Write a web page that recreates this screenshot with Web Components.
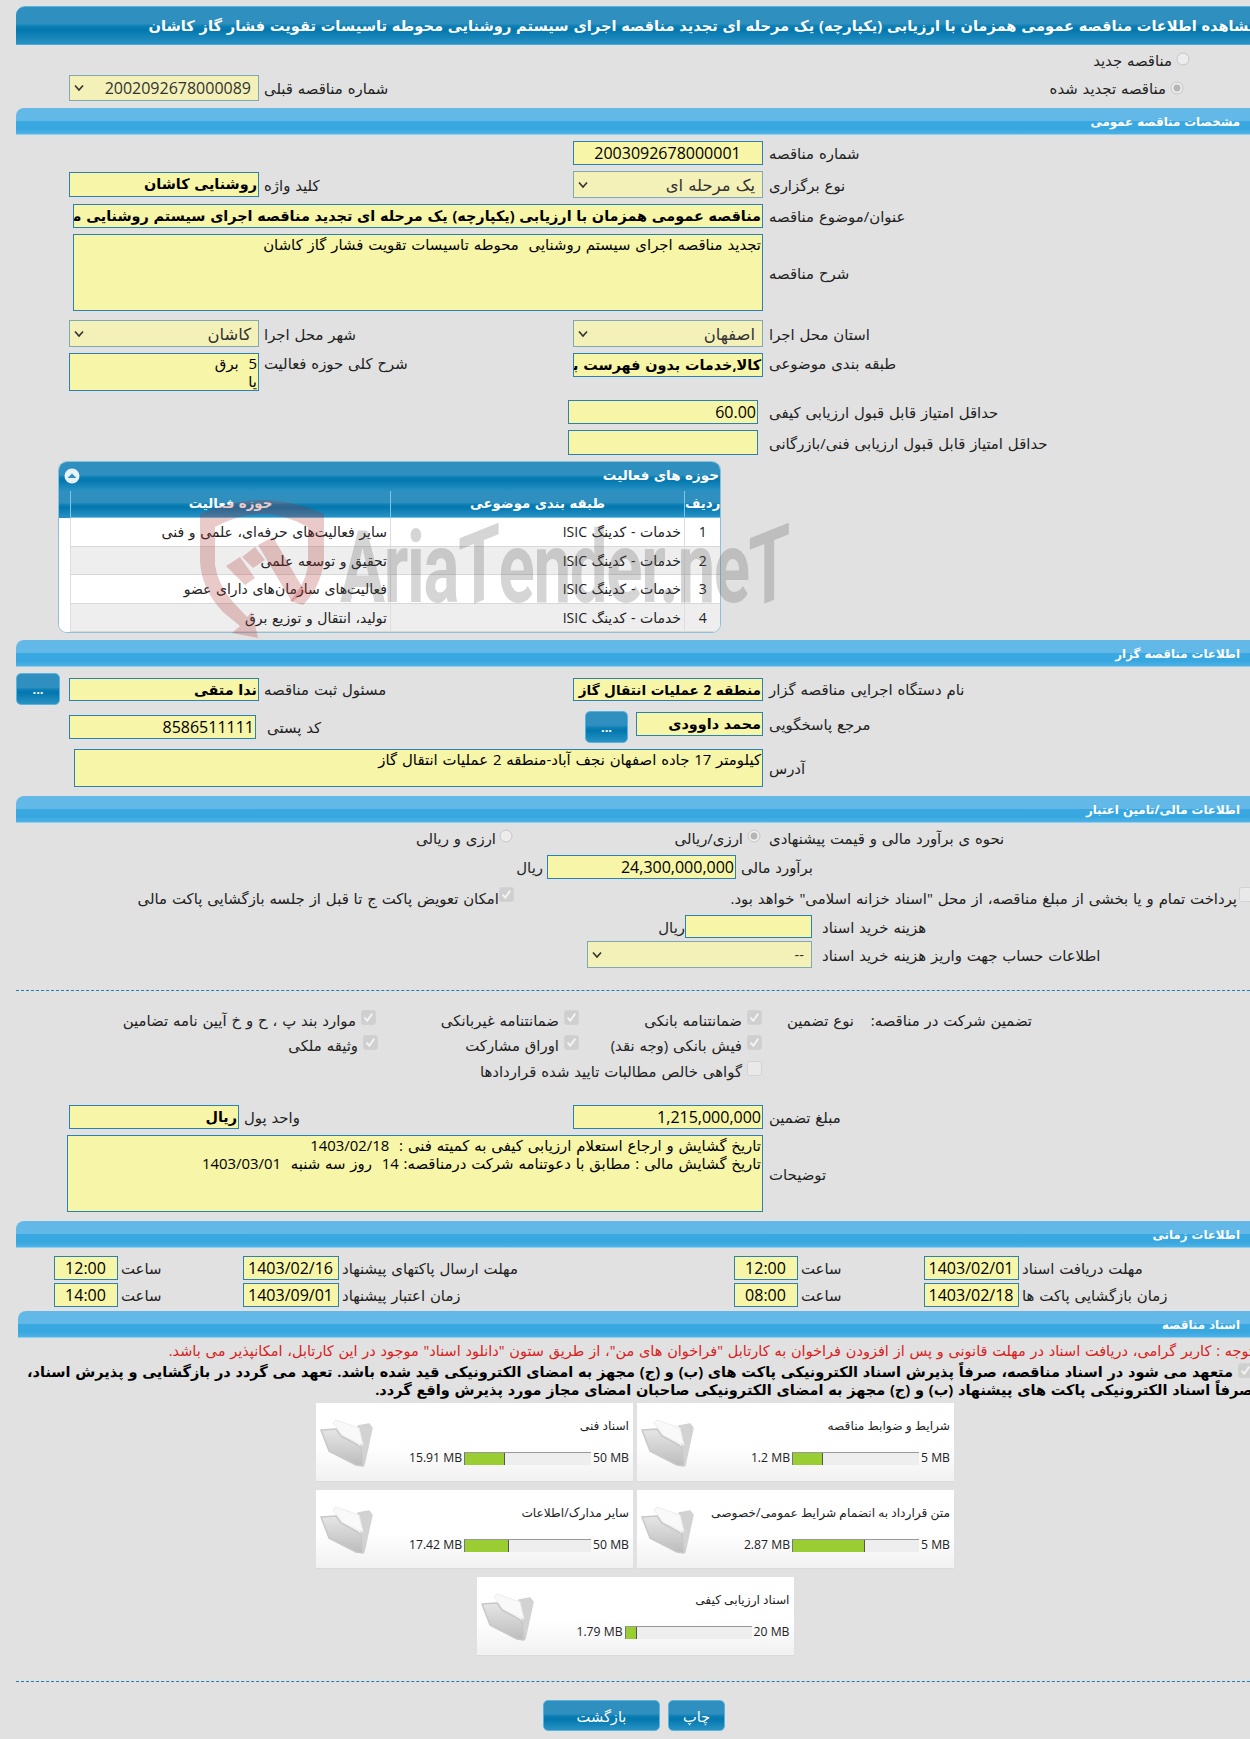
<!DOCTYPE html>
<html lang="fa">
<head>
<meta charset="utf-8">
<title>مشاهده اطلاعات مناقصه</title>
<style>
    html { overflow-x: hidden; background: #e1e1e1; }
    body {
        margin: 0;
        width: 1275px;
        height: 1739px;
        background: #e1e1e1;
        font: 14.9px "Open Sans", "DejaVu Sans", sans-serif;
        word-spacing: 1px;
        color: #222;
    }
</style>
</head>
<body>
<script>
const DARK_BAR = 'linear-gradient(#2f90bf 0, #2f90bf 44%, #0e7fb5 52%, #0277ae 62%, #2a92c4 100%)';

class TenPage extends HTMLElement {
    constructor() {
        super();
        this.attachShadow({ mode: 'open' });
    }
    connectedCallback() {
        this.shadowRoot.innerHTML = `
            <style>
                :host { display: block; position: relative; padding-top: 6px; }
                .shield { position: absolute; left: 200px; top: 500px; pointer-events: none; }
                .mark {
                    position: absolute; left: 340px; top: 508px; pointer-events: none;
                    font: bold 100px Roboto, sans-serif; line-height: 120px; white-space: nowrap; word-spacing: 0;
                    color: rgba(80, 80, 80, .24); transform-origin: 0 50%; transform: scaleX(.672);
                    direction: ltr; letter-spacing: -2px;
                }
                .mark span { display: inline-block; transform: skewY(-15deg); }
            </style>
            <slot></slot>
            <svg class="shield" width="126" height="140" viewBox="0 0 126 140">
                <g fill="rgba(170,40,40,.25)">
                    <path d="M0 14 Q62 -14 124 14 L124 62 Q120 88 103 105 L90 101 Q108 80 108 62 L108 27 Q62 1 15 27 L15 65 Q18 85 33 102 L47 117 L52 112 L58 138 L32 133 L40 126 L23 112 Q2 90 0 62 Z"/>
                    <path d="M26 66 L40 57 L55 78 L45 85 Z"/>
                    <path d="M42 57 L55 47 L65 60 L53 68 Z"/>
                    <path d="M58 45 L73 37 L105 92 L92 102 Z"/>
                </g>
            </svg>
            <div class="mark">Aria<span>T</span>ender.ne<span>T</span></div>
        `;
    }
}

class TenTitle extends HTMLElement {
    constructor() {
        super();
        this.attachShadow({ mode: 'open' });
    }
    connectedCallback() {
        this.shadowRoot.innerHTML = `
            <style>
                :host {
                    display: block; height: 39px; line-height: 37px; box-sizing: border-box;
                    background: ${DARK_BAR};
                    border-top: 1px solid #5db5de; border-bottom: 1px solid #4aa8d6;
                    border-top-left-radius: 9px; margin-left: 16px;
                    color: #fff; font-weight: bold; font-size: 14.6px;
                    direction: rtl; white-space: nowrap; padding-right: 17px; overflow: hidden;
                }
            </style>
            <slot></slot>
        `;
    }
}

class TenBand extends HTMLElement {
    constructor() {
        super();
        this.attachShadow({ mode: 'open' });
    }
    connectedCallback() {
        this.shadowRoot.innerHTML = `
            <style>
                :host {
                    display: block; height: 27px; line-height: 26px; box-sizing: border-box;
                    margin-top: var(--top, 7px); margin-left: var(--ml, 16px);
                    background: linear-gradient(#62b9e8 0, #62b9e8 48%, #3aa8e1 52%, #38a7e0 80%, #4eb2e6 100%);
                    border-bottom: 1px solid #8fd0f0;
                    border-top-left-radius: 8px;
                    color: #fff; font-weight: bold; font-size: 11.8px;
                    direction: rtl; padding-right: 35px;
                }
            </style>
            <slot></slot>
        `;
    }
}

// one line of the form, items follow each other from the left edge
class TenRow extends HTMLElement {
    constructor() {
        super();
        this.attachShadow({ mode: 'open' });
    }
    connectedCallback() {
        this.shadowRoot.innerHTML = `
            <style>
                :host {
                    display: flex; direction: ltr; align-items: center;
                    margin-top: var(--top, 6px); height: var(--h, 24px);
                    padding-left: 16px;
                }
            </style>
            <slot></slot>
        `;
    }
}

// box (input, select or textarea look) and its label on the right
class TenField extends HTMLElement {
    constructor() {
        super();
        this.attachShadow({ mode: 'open' });
    }
    connectedCallback() {
        const kind = this.getAttribute('kind') || 'input';
        const label = this.getAttribute('label') || '';
        this.shadowRoot.innerHTML = `
            <style>
                :host {
                    display: flex; flex: none; direction: ltr; align-items: var(--align, center);
                    margin-left: var(--ml, 0);
                }
                .box {
                    flex: none; width: var(--w, 190px); height: var(--bh, 24px); box-sizing: border-box;
                    position: relative; overflow: hidden; direction: rtl;
                    background: #f7f5a7; border: 1px solid #2a82b0;
                    font-size: var(--fs, 16px); line-height: var(--lh, 22px); color: #000;
                    white-space: pre; padding-right: var(--pr, 1px); text-align: var(--ta, right);
                }
                .select {
                    background: #f3f0b8; border: 1px solid #7fa9b5; color: #333;
                    padding-right: 7px; line-height: var(--lh, 25px);
                }
                .select svg { position: absolute; left: 4px; top: 50%; margin-top: -4px; }
                .area { font-size: var(--fs, 14.9px); line-height: var(--lh, 18px); white-space: pre-wrap; }
                .strong { font-weight: bold; font-size: var(--fs, 14.4px); }
                .lab {
                    flex: none; width: var(--lw, auto); margin-left: var(--gap, 5px);
                    margin-top: var(--ltop, 0); direction: rtl; text-align: left; white-space: nowrap;
                    color: #222;
                }
            </style>
            <div class="box ${kind} ${this.hasAttribute('strong') ? 'strong' : ''}"><slot></slot>${kind === 'select' ? `
                <svg width="10" height="8" viewBox="0 0 10 8"><path d="M1 1.5 L5 6 L9 1.5" fill="none" stroke="#333" stroke-width="1.6"/></svg>` : ''}</div>
            <span class="lab" dir="rtl"></span>
        `;
        this.shadowRoot.querySelector('.lab').textContent = label;
    }
}

class TenText extends HTMLElement {
    constructor() {
        super();
        this.attachShadow({ mode: 'open' });
    }
    connectedCallback() {
        this.shadowRoot.innerHTML = `
            <style>
                :host {
                    display: block; flex: none; direction: rtl; white-space: nowrap;
                    margin-left: var(--ml, 0); width: var(--w, auto);
                    text-align: var(--ta, right); color: #222;
                }
            </style>
            <slot></slot>
        `;
    }
}

// disabled radio or checkbox with the text on its left
class TenChoice extends HTMLElement {
    constructor() {
        super();
        this.attachShadow({ mode: 'open' });
    }
    connectedCallback() {
        const type = this.getAttribute('type') || 'check';
        const on = this.hasAttribute('on');
        const glyph = type === 'radio'
            ? `<svg width="14" height="14" viewBox="0 0 14 14"><circle cx="7" cy="7" r="6" fill="#ececec" stroke="#c6c6c6"/>${on ? '<circle cx="7" cy="7" r="3.4" fill="#b5b5b5"/>' : ''}</svg>`
            : `<svg width="15" height="15" viewBox="0 0 15 15"><rect x=".5" y=".5" width="14" height="14" rx="2" fill="${on ? '#cfcfcf' : '#e9e9e9'}" stroke="#d2d2d2"/>${on ? '<path d="M3.6 7.6 L6.3 10.8 L11.2 3.6" fill="none" stroke="#f4f4f4" stroke-width="1.9"/>' : ''}</svg>`;
        this.shadowRoot.innerHTML = `
            <style>
                :host {
                    display: flex; flex: none; direction: ltr; align-items: center;
                    margin-left: var(--ml, 0);
                }
                .txt { width: var(--w, auto); direction: rtl; text-align: right; white-space: nowrap; color: #222; }
                svg { display: block; flex: none; margin-left: var(--g, 5px); margin-top: var(--mt, -5px); }
            </style>
            <div class="txt"><slot></slot></div>
            ${glyph}
        `;
    }
}

class TenButton extends HTMLElement {
    constructor() {
        super();
        this.attachShadow({ mode: 'open' });
    }
    connectedCallback() {
        this.shadowRoot.innerHTML = `
            <style>
                :host {
                    display: flex; flex: none; align-items: center; justify-content: center;
                    width: var(--w, 44px); height: var(--bh, 32px); box-sizing: border-box;
                    margin-left: var(--ml, 0);
                    background: ${DARK_BAR}; border: 1px solid #58b4de; border-radius: 5px;
                    color: #fff; font-size: var(--fs, 13px); font-weight: var(--fw, bold); direction: rtl;
                }
            </style>
            <slot></slot>
        `;
    }
}

class TenRule extends HTMLElement {
    constructor() {
        super();
        this.attachShadow({ mode: 'open' });
    }
    connectedCallback() {
        this.shadowRoot.innerHTML = `
            <style>
                :host {
                    display: block; height: 0; margin-left: 16px; margin-top: var(--top, 22px);
                    border-top: 1px dashed #2180b0;
                }
            </style>
        `;
    }
}

class TenPanel extends HTMLElement {
    constructor() {
        super();
        this.attachShadow({ mode: 'open' });
    }
    connectedCallback() {
        this.shadowRoot.innerHTML = `
            <style>
                :host {
                    display: block; width: 663px; height: 172px; box-sizing: border-box;
                    margin: 6px 0 0 58px; overflow: hidden; background: #fff;
                    border: 1px solid #8cc1dc; border-radius: 9px;
                }
                .head {
                    height: 29px; line-height: 27px; background: ${DARK_BAR}; position: relative;
                    color: #fff; font-weight: bold; font-size: 13.5px; direction: rtl; padding-right: 1px;
                }
                .head svg { position: absolute; left: 5px; top: 6px; }
                .grid { display: grid; grid-template-columns: 11px 320px 294px 1fr; direction: ltr; }
            </style>
            <div class="head">حوزه های فعالیت
                <svg width="16" height="16" viewBox="0 0 16 16"><circle cx="8" cy="8" r="7.5" fill="#e8f2f8"/><path d="M3.6 10 L8 5.6 L12.4 10 Z" fill="#2f8fbe"/></svg>
            </div>
            <div class="grid"><slot></slot></div>
        `;
    }
}

class TenCell extends HTMLElement {
    constructor() {
        super();
        this.attachShadow({ mode: 'open' });
    }
    connectedCallback() {
        const head = this.hasAttribute('head');
        const tone = this.hasAttribute('tone');
        this.shadowRoot.innerHTML = `
            <style>
                :host {
                    display: block; box-sizing: border-box; direction: rtl; white-space: nowrap;
                    height: ${head ? 27 : 28.5}px; line-height: ${head ? 24 : 28}px; font-size: ${head ? 13.3 : 14}px;
                    background: ${head ? DARK_BAR : tone ? '#eeeeee' : '#ffffff'};
                    color: ${head ? '#fff' : '#222'}; font-weight: ${head ? 'bold' : 'normal'};
                    text-align: ${head || this.hasAttribute('mid') ? 'center' : 'right'};
                    padding: 0 ${head ? 0 : 3}px;
                    border-left: 1px solid ${head ? '#7cc6ea' : '#dedede'};
                    border-bottom: ${head ? '1px solid #6fbfe6' : '1px solid #d8d8d8'};
                }
                :host([blank]) { background: ${head ? DARK_BAR : '#fff'}; border: 0; padding: 0; }
            </style>
            <slot></slot>
        `;
    }
}

class TenNotice extends HTMLElement {
    constructor() {
        super();
        this.attachShadow({ mode: 'open' });
    }
    connectedCallback() {
        this.shadowRoot.innerHTML = `
            <style>
                :host {
                    display: block; margin-top: 3px; direction: rtl; white-space: nowrap;
                    padding-right: 22px; font-size: 14.5px; line-height: 20px; color: #d8201c;
                }
                .strong {
                    margin-top: 2px; color: #000; font-weight: bold; font-size: 14.5px; line-height: 17.5px;
                }
                svg { float: right; margin: 0 0 0 5px; }
            </style>
            <slot></slot>
            <div class="strong">
                <svg width="15" height="15" viewBox="0 0 15 15"><rect x=".5" y=".5" width="14" height="14" rx="2" fill="#cfcfcf" stroke="#d2d2d2"/><path d="M3.6 7.6 L6.3 10.8 L11.2 3.6" fill="none" stroke="#f4f4f4" stroke-width="1.9"/></svg>
                <slot name="pledge"></slot>
            </div>
        `;
    }
}

class TenDocs extends HTMLElement {
    constructor() {
        super();
        this.attachShadow({ mode: 'open' });
    }
    connectedCallback() {
        this.shadowRoot.innerHTML = `
            <style>
                :host {
                    display: flex; flex-wrap: wrap; justify-content: center; gap: 8px 4px;
                    width: 638px; margin: 5px 0 0 316px; direction: rtl;
                }
            </style>
            <slot></slot>
        `;
    }
}

class TenDoc extends HTMLElement {
    constructor() {
        super();
        this.attachShadow({ mode: 'open' });
    }
    connectedCallback() {
        const pct = parseFloat(this.getAttribute('used')) / parseFloat(this.getAttribute('max')) * 100;
        this.shadowRoot.innerHTML = `
            <style>
                :host {
                    display: flex; flex: none; direction: ltr; width: 317px; height: 79px; box-sizing: border-box;
                    background: linear-gradient(#fff 0, #fff 55%, #f1f1f1 100%);
                    border-bottom: 1px solid #dadada; font-size: 12.2px; color: #222; word-spacing: 0;
                }
                svg.folder { flex: none; margin: 16px 0 0 4px; }
                .body { flex: 1; display: flex; flex-direction: column; padding-right: 4px; }
                .name { height: 37px; padding-top: 13px; box-sizing: border-box; direction: rtl; white-space: nowrap; line-height: 20px; }
                .meter { display: flex; justify-content: flex-end; align-items: center; height: 16px; margin-top: 10px; line-height: 16px; white-space: nowrap; }
                .bar {
                    width: 127px; height: 13px; margin: 0 2px; box-sizing: border-box; background: #eeeeee;
                    border-top: 1px solid #999; border-left: 1px solid #777; flex: none;
                }
                .fill { height: 100%; width: ${pct}%; background: #9acd32; border-right: 1px solid #555; box-sizing: border-box; }
            </style>
            <svg class="folder" width="53" height="48" viewBox="0 0 53 48">
                <defs>
                    <linearGradient id="f" x1="0" y1="0" x2="0" y2="1"><stop offset="0" stop-color="#e6e6e6"/><stop offset="1" stop-color="#bcbcbc"/></linearGradient>
                    <filter id="soft"><feGaussianBlur stdDeviation=".45"/></filter>
                </defs>
                <g filter="url(#soft)" stroke-linejoin="round">
                    <path d="M38 7 L49 5 L52 9 L44 46 Z" fill="#d2d2d2" stroke="#d2d2d2" stroke-width="1.5"/>
                    <path d="M13 4 L16 1 L39 9 L43 26 L23 17 Z" fill="#f9f9f9" stroke="#ececec"/>
                    <path d="M1 11 L16 10 L21 17 L38 26 L41 29 L43 47 L36 46 L9 32 Z" fill="url(#f)" stroke="#c8c8c8" stroke-width="1.5"/>
                </g>
            </svg>
            <div class="body">
                <div class="name"></div>
                <div class="meter"><span class="u"></span><div class="bar"><div class="fill"></div></div><span class="m"></span></div>
            </div>
        `;
        this.shadowRoot.querySelector('.name').textContent = this.getAttribute('name');
        this.shadowRoot.querySelector('.u').textContent = this.getAttribute('used') + ' MB';
        this.shadowRoot.querySelector('.m').textContent = this.getAttribute('max') + ' MB';
    }
}

customElements.define('ten-page', TenPage);
customElements.define('ten-title', TenTitle);
customElements.define('ten-band', TenBand);
customElements.define('ten-row', TenRow);
customElements.define('ten-field', TenField);
customElements.define('ten-text', TenText);
customElements.define('ten-choice', TenChoice);
customElements.define('ten-button', TenButton);
customElements.define('ten-rule', TenRule);
customElements.define('ten-panel', TenPanel);
customElements.define('ten-cell', TenCell);
customElements.define('ten-notice', TenNotice);
customElements.define('ten-docs', TenDocs);
customElements.define('ten-doc', TenDoc);
</script>

<ten-page>
    <ten-title>مشاهده اطلاعات مناقصه عمومی همزمان با ارزیابی (یکپارچه) یک مرحله ای تجدید مناقصه اجرای سیستم روشنایی محوطه تاسیسات تقویت فشار گاز کاشان</ten-title>

    <ten-row style="--top:5px;--h:20px">
        <ten-choice type="radio" style="--ml:956px;--w:200px;--g:4px;--mt:-3px">مناقصه جدید</ten-choice>
    </ten-row>
    <ten-row style="--top:5px;--h:26px">
        <ten-field kind="select" label="شماره مناقصه قبلی" style="--ml:53px;--bh:26px;--lw:662px">2002092678000089</ten-field>
        <ten-choice type="radio" on style="--ml:0;--w:240px;--g:4px;--mt:-1px">مناقصه تجدید شده</ten-choice>
    </ten-row>

    <ten-band>مشخصات مناقصه عمومی</ten-band>

    <ten-row>
        <ten-field label="شماره مناقصه" style="--ml:557px;--gap:6px;--ta:center">2003092678000001</ten-field>
    </ten-row>
    <ten-row style="--h:27px">
        <ten-field strong label="کلید واژه" style="--ml:53px;--bh:25px;--lw:309px">روشنایی کاشان</ten-field>
        <ten-field kind="select" label="نوع برگزاری" style="--bh:27px;--gap:6px;--fs:16.4px">یک مرحله ای</ten-field>
    </ten-row>
    <ten-row>
        <ten-field strong label="عنوان/موضوع مناقصه" style="--ml:57px;--w:690px;--gap:6px">مناقصه عمومی همزمان با ارزیابی (یکپارچه) یک مرحله ای تجدید مناقصه اجرای سیستم روشنایی محوطه تاسیسات تقویت فشار گاز کاشان</ten-field>
    </ten-row>
    <ten-row style="--h:77px">
        <ten-field kind="area" label="شرح مناقصه" style="--ml:57px;--w:690px;--bh:77px;--gap:6px">تجدید مناقصه اجرای سیستم روشنایی  محوطه تاسیسات تقویت فشار گاز کاشان</ten-field>
    </ten-row>
    <ten-row style="--top:9px;--h:27px">
        <ten-field kind="select" label="شهر محل اجرا" style="--ml:53px;--bh:27px;--lw:309px;--fs:16.4px">کاشان</ten-field>
        <ten-field kind="select" label="استان محل اجرا" style="--bh:27px;--gap:6px;--fs:16.4px">اصفهان</ten-field>
    </ten-row>
    <ten-row style="--h:38px">
        <ten-field kind="area" label="شرح کلی حوزه فعالیت" style="--ml:53px;--bh:38px;--lw:309px;--align:flex-start">5  برق
یا</ten-field>
        <ten-field strong label="طبقه بندی موضوعی" style="--gap:6px;--align:flex-start;margin-bottom:14px">کالا,خدمات بدون فهرست بها</ten-field>
    </ten-row>
    <ten-row style="--top:9px">
        <ten-field label="حداقل امتیاز قابل قبول ارزیابی کیفی" style="--ml:552px;--gap:11px">60.00</ten-field>
    </ten-row>
    <ten-row style="--h:25px">
        <ten-field label="حداقل امتیاز قابل قبول ارزیابی فنی/بازرگانی" style="--ml:552px;--gap:11px;--bh:25px"></ten-field>
    </ten-row>

    <ten-panel>
        <ten-cell head blank></ten-cell>
        <ten-cell head>حوزه فعالیت</ten-cell>
        <ten-cell head>طبقه بندی موضوعی</ten-cell>
        <ten-cell head>ردیف</ten-cell>

        <ten-cell blank></ten-cell>
        <ten-cell>سایر فعالیت‌های حرفه‌ای، علمی و فنی</ten-cell>
        <ten-cell>خدمات - کدینگ ISIC</ten-cell>
        <ten-cell mid>1</ten-cell>

        <ten-cell blank></ten-cell>
        <ten-cell tone>تحقیق و توسعه علمی</ten-cell>
        <ten-cell tone>خدمات - کدینگ ISIC</ten-cell>
        <ten-cell tone mid>2</ten-cell>

        <ten-cell blank></ten-cell>
        <ten-cell>فعالیت‌های سازمان‌های دارای عضو</ten-cell>
        <ten-cell>خدمات - کدینگ ISIC</ten-cell>
        <ten-cell mid>3</ten-cell>

        <ten-cell blank></ten-cell>
        <ten-cell tone>تولید، انتقال و توزیع برق</ten-cell>
        <ten-cell tone>خدمات - کدینگ ISIC</ten-cell>
        <ten-cell tone mid>4</ten-cell>
    </ten-panel>

    <ten-band>اطلاعات مناقصه گزار</ten-band>

    <ten-row style="--h:32px">
        <ten-button>...</ten-button>
        <ten-field strong label="مسئول ثبت مناقصه" style="--ml:9px;--bh:23px;--lw:309px">ندا متقی</ten-field>
        <ten-field strong label="نام دستگاه اجرایی مناقصه گزار" style="--bh:23px;--gap:6px;--fs:13.6px">منطقه 2 عملیات انتقال گاز</ten-field>
    </ten-row>
    <ten-row style="--h:32px">
        <ten-field label="کد پستی" style="--ml:53px;--w:187px;--gap:11px;--lw:318px">8586511111</ten-field>
        <ten-button style="--w:43px">...</ten-button>
        <ten-field strong label="مرجع پاسخگویی" style="--ml:8px;--w:127px;--gap:6px;margin-bottom:6px">محمد داوودی</ten-field>
    </ten-row>
    <ten-row style="--h:38px">
        <ten-field kind="area" label="آدرس" style="--ml:58px;--w:689px;--bh:38px;--gap:6px">کیلومتر 17 جاده اصفهان نجف آباد-منطقه 2 عملیات انتقال گاز</ten-field>
    </ten-row>

    <ten-band style="--top:9px">اطلاعات مالی/تامین اعتبار</ten-band>

    <ten-row style="--top:4px;--h:22px">
        <ten-choice type="radio" style="--ml:390px;--w:90px;--g:3px">ارزی و ریالی</ten-choice>
        <ten-choice type="radio" on style="--ml:160px;--w:70px;--g:4px">ارزی/ریالی</ten-choice>
        <ten-text style="--ml:8px;--w:300px;--ta:left">نحوه ی برآورد مالی و قیمت پیشنهادی</ten-text>
    </ten-row>
    <ten-row>
        <ten-text style="--ml:502px;--w:25px">ریال</ten-text>
        <ten-field label="برآورد مالی" style="--ml:4px;--w:189px">24,300,000,000</ten-field>
    </ten-row>
    <ten-row style="--top:9px;--h:20px">
        <ten-choice on style="--ml:122px;--w:361px;--g:0;--mt:-7px">امکان تعویض پاکت ج تا قبل از جلسه بازگشایی پاکت مالی</ten-choice>
        <ten-choice style="--ml:212px;--w:511px;--g:2px;--mt:-7px">پرداخت تمام و یا بخشی از مبلغ مناقصه، از محل "اسناد خزانه اسلامی" خواهد بود.</ten-choice>
    </ten-row>
    <ten-row style="--top:7px;--h:23px">
        <ten-text style="--ml:646px;--w:23px">ریال</ten-text>
        <ten-field label="هزینه خرید اسناد" style="--w:127px;--bh:23px;--gap:10px"></ten-field>
    </ten-row>
    <ten-row style="--top:3px;--h:27px">
        <ten-field kind="select" label="اطلاعات حساب جهت واریز هزینه خرید اسناد" style="--ml:571px;--w:225px;--bh:27px;--gap:10px;--fs:14.6px">--</ten-field>
    </ten-row>

    <ten-rule></ten-rule>

    <ten-row style="--top:17px">
        <ten-choice on style="--ml:120px;--w:220px">موارد بند پ ، ح و خ آیین نامه تضامین</ten-choice>
        <ten-choice on style="--ml:53px;--w:130px">ضمانتنامه غیربانکی</ten-choice>
        <ten-choice on style="--ml:53px;--w:110px">ضمانتنامه بانکی</ten-choice>
        <ten-text style="--ml:22px;--w:70px">نوع تضمین</ten-text>
        <ten-text style="--ml:8px;--w:170px">تضمین شرکت در مناقصه:</ten-text>
    </ten-row>
    <ten-row style="--top:1px">
        <ten-choice on style="--ml:262px;--w:80px">وثیقه ملکی</ten-choice>
        <ten-choice on style="--ml:81px;--w:100px">اوراق مشارکت</ten-choice>
        <ten-choice on style="--ml:18px;--w:145px">فیش بانکی (وجه نقد)</ten-choice>
    </ten-row>
    <ten-row style="--top:2px">
        <ten-choice style="--ml:456px;--w:270px">گواهی خالص مطالبات تایید شده قراردادها</ten-choice>
    </ten-row>

    <ten-row style="--top:22px">
        <ten-field strong label="واحد پول" style="--ml:53px;--w:170px;--lw:329px">ریال</ten-field>
        <ten-field label="مبلغ تضمین" style="--gap:6px">1,215,000,000</ten-field>
    </ten-row>
    <ten-row style="--h:77px">
        <ten-field kind="area" label="توضیحات" style="--ml:51px;--w:696px;--bh:77px;--gap:6px">تاریخ گشایش و ارجاع استعلام ارزیابی کیفی به کمیته فنی :  1403/02/18
تاریخ گشایش مالی : مطابق با دعوتنامه شرکت درمناقصه: 14  روز سه شنبه  1403/03/01</ten-field>
    </ten-row>

    <ten-band style="--top:9px">اطلاعات زمانی</ten-band>

    <ten-row style="--top:8px">
        <ten-field label="ساعت" style="--ml:38px;--w:64px;--gap:3px;--lw:122px;--ta:center">12:00</ten-field>
        <ten-field label="مهلت ارسال پاکتهای پیشنهاد" style="--w:96px;--gap:3px;--lw:392px;--ta:center">1403/02/16</ten-field>
        <ten-field label="ساعت" style="--w:64px;--gap:3px;--lw:123px;--ta:center">12:00</ten-field>
        <ten-field label="مهلت دریافت اسناد" style="--w:95px;--gap:3px;--ta:center">1403/02/01</ten-field>
    </ten-row>
    <ten-row style="--top:3px">
        <ten-field label="ساعت" style="--ml:38px;--w:64px;--gap:3px;--lw:122px;--ta:center">14:00</ten-field>
        <ten-field label="زمان اعتبار پیشنهاد" style="--w:96px;--gap:3px;--lw:392px;--ta:center">1403/09/01</ten-field>
        <ten-field label="ساعت" style="--w:64px;--gap:3px;--lw:123px;--ta:center">08:00</ten-field>
        <ten-field label="زمان بازگشایی پاکت ها" style="--w:95px;--gap:3px;--ta:center">1403/02/18</ten-field>
    </ten-row>

    <ten-band style="--top:4px;--ml:18px">اسناد مناقصه</ten-band>

    <ten-notice>توجه : کاربر گرامی، دریافت اسناد در مهلت قانونی و پس از افزودن فراخوان به کارتابل "فراخوان های من"، از طریق ستون "دانلود اسناد" موجود در این کارتابل، امکانپذیر می باشد.
        <span slot="pledge">متعهد می شود در اسناد مناقصه، صرفاً پذیرش اسناد الکترونیکی پاکت های (ب) و (ج) مجهز به امضای الکترونیکی قید شده باشد. تعهد می گردد در بازگشایی و پذیرش اسناد،<br>صرفاً اسناد الکترونیکی پاکت های پیشنهاد (ب) و (ج) مجهز به امضای الکترونیکی صاحبان امضای مجاز مورد پذیرش واقع گردد.</span>
    </ten-notice>

    <ten-docs>
        <ten-doc name="شرایط و ضوابط مناقصه" used="1.2" max="5"></ten-doc>
        <ten-doc name="اسناد فنی" used="15.91" max="50"></ten-doc>
        <ten-doc name="متن قرارداد به انضمام شرایط عمومی/خصوصی" used="2.87" max="5"></ten-doc>
        <ten-doc name="سایر مدارک/اطلاعات" used="17.42" max="50"></ten-doc>
        <ten-doc name="اسناد ارزیابی کیفی" used="1.79" max="20"></ten-doc>
    </ten-docs>

    <ten-rule style="--top:25px"></ten-rule>

    <ten-row style="--top:18px;--h:31px">
        <ten-button style="--ml:527px;--w:117px;--bh:31px;--fs:14.6px;--fw:normal">بازگشت</ten-button>
        <ten-button style="--ml:8px;--w:57px;--bh:31px;--fs:14.6px;--fw:normal">چاپ</ten-button>
    </ten-row>
</ten-page>
</body>
</html>
